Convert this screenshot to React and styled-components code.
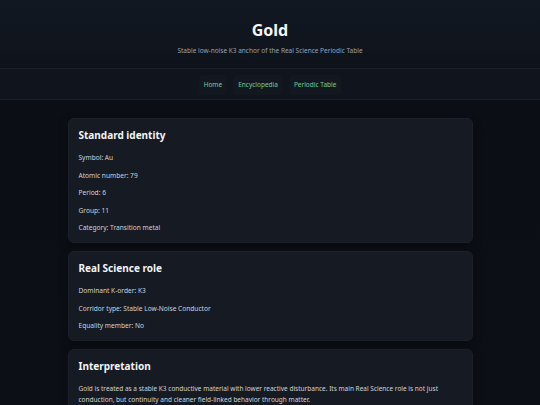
import React from "react";
import styled, { createGlobalStyle } from "styled-components";

const Global = createGlobalStyle`
  html, body { margin: 0; padding: 0; }
  body {
    background: #0b0e14;
    font-family: "Noto Sans", "Open Sans", sans-serif;
    color: #d6dae1;
  }
`;

const Page = styled.div`
  min-height: 405px;
  background: linear-gradient(180deg, #0b0e14 0%, #0c1016 100%);
`;

const Header = styled.header`
  height: 68px;
  display: flex;
  flex-direction: column;
  align-items: center;
  justify-content: center;
  background: linear-gradient(180deg, #121822 0%, #0e131b 100%);
  box-sizing: border-box;
  padding-top: 7px;
`;

const Title = styled.h1`
  margin: 0;
  font-size: 16px;
  line-height: 20px;
  font-weight: 700;
  color: #f4f5f7;
`;

const Subtitle = styled.p`
  margin: 6px 0 0;
  font-size: 6.5px;
  line-height: 10px;
  color: #98a2b3;
`;

const Nav = styled.nav`
  height: 32px;
  box-sizing: border-box;
  display: flex;
  align-items: center;
  justify-content: center;
  gap: 6px;
  padding-top: 2px;
  background: #10151d;
  border-top: 1px solid #1a202b;
  border-bottom: 1px solid #1a202b;
`;

const NavLink = styled.a`
  font-size: 6.5px;
  line-height: 10px;
  color: #74cc98;
  text-decoration: none;
  padding: 5px 5px;
  border-radius: 4px;
  background: rgba(255, 255, 255, 0.015);
`;

const Main = styled.main`
  max-width: 405px;
  margin: 0 auto;
  padding: 18px 0 20px;
  display: flex;
  flex-direction: column;
  gap: 8px;
`;

const Card = styled.section`
  background: #151a23;
  border: 1px solid #1b212b;
  border-radius: 6px;
  padding: 9px 10px 9px;
  box-shadow: 0 3px 10px rgba(0, 0, 0, 0.35);
`;

const CardTitle = styled.h2`
  margin: 0 0 10px;
  font-size: 10px;
  line-height: 14px;
  font-weight: 700;
  color: #f3f4f6;
`;

const List = styled.div`
  display: flex;
  flex-direction: column;
  gap: 6.5px;
`;

const Item = styled.p`
  margin: 0;
  font-size: 6.6px;
  line-height: 11px;
  color: #d0d4db;
`;

const Body = styled.p`
  margin: 0;
  font-size: 6.5px;
  line-height: 11px;
  color: #d0d4db;
`;

export default function App() {
  return (
    <Page>
      <Global />
      <Header>
        <Title>Gold</Title>
        <Subtitle>Stable low-noise K3 anchor of the Real Science Periodic Table</Subtitle>
      </Header>
      <Nav>
        <NavLink href="#">Home</NavLink>
        <NavLink href="#">Encyclopedia</NavLink>
        <NavLink href="#">Periodic Table</NavLink>
      </Nav>
      <Main>
        <Card>
          <CardTitle>Standard identity</CardTitle>
          <List>
            <Item>Symbol: Au</Item>
            <Item>Atomic number: 79</Item>
            <Item>Period: 6</Item>
            <Item>Group: 11</Item>
            <Item>Category: Transition metal</Item>
          </List>
        </Card>
        <Card>
          <CardTitle>Real Science role</CardTitle>
          <List>
            <Item>Dominant K-order: K3</Item>
            <Item>Corridor type: Stable Low-Noise Conductor</Item>
            <Item>Equality member: No</Item>
          </List>
        </Card>
        <Card>
          <CardTitle>Interpretation</CardTitle>
          <Body>
            Gold is treated as a stable K3 conductive material with lower reactive disturbance. Its main Real Science role is not just conduction, but continuity and cleaner field-linked behavior through matter.
          </Body>
        </Card>
      </Main>
    </Page>
  );
}
